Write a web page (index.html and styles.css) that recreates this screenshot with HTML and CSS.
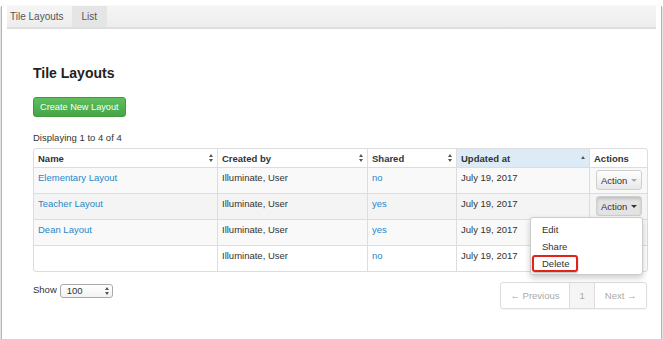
FILE: index.html
```html
<!DOCTYPE html>
<html lang="en">
<head>
    <meta charset="UTF-8">
    <title>Tile Layouts</title>
    <link rel="stylesheet" href="styles.css">
</head>
<body>
    <div class="window">
        <div class="tabs">
            <span class="tab">Tile Layouts</span>
            <span class="tab tab-active">List</span>
        </div>

        <div class="content">
            <h3>Tile Layouts</h3>
            <button class="btn-create">Create New Layout</button>
            <p class="count">Displaying 1 to 4 of 4</p>

            <table class="layouts">
                <colgroup>
                    <col class="col-name">
                    <col class="col-created">
                    <col class="col-shared">
                    <col class="col-updated">
                    <col class="col-actions">
                </colgroup>
                <thead>
                    <tr>
                        <th><span>Name</span><i class="sort"></i></th>
                        <th><span>Created by</span><i class="sort"></i></th>
                        <th><span>Shared</span><i class="sort"></i></th>
                        <th class="sorted"><span>Updated at</span><i class="sort-up"></i></th>
                        <th>Actions</th>
                    </tr>
                </thead>
                <tbody>
                    <tr class="odd">
                        <td><a href="#">Elementary Layout</a></td>
                        <td>Illuminate, User</td>
                        <td><a href="#">no</a></td>
                        <td>July 19, 2017</td>
                        <td><span class="btn-group"><button class="btn-action">Action <i class="caret caret-light"></i></button></span></td>
                    </tr>
                    <tr class="hover">
                        <td><a href="#">Teacher Layout</a></td>
                        <td>Illuminate, User</td>
                        <td><a href="#">yes</a></td>
                        <td>July 19, 2017</td>
                        <td>
                            <span class="btn-group">
                                <button class="btn-action btn-open">Action <i class="caret"></i></button>
                                <ul class="dropdown">
                                    <li>Edit</li>
                                    <li>Share</li>
                                    <li class="highlight">Delete</li>
                                </ul>
                            </span>
                        </td>
                    </tr>
                    <tr class="odd">
                        <td><a href="#">Dean Layout</a></td>
                        <td>Illuminate, User</td>
                        <td><a href="#">yes</a></td>
                        <td>July 19, 2017</td>
                        <td></td>
                    </tr>
                    <tr>
                        <td></td>
                        <td>Illuminate, User</td>
                        <td><a href="#">no</a></td>
                        <td>July 19, 2017</td>
                        <td></td>
                    </tr>
                </tbody>
            </table>

            <div class="footer">
                <div class="show">
                    Show
                    <span class="select">100 <i class="sort"></i></span>
                </div>
                <ul class="pagination">
                    <li>&larr; Previous</li>
                    <li class="current">1</li>
                    <li>Next &rarr;</li>
                </ul>
            </div>
        </div>
    </div>
</body>
</html>
```

FILE: styles.css
```css
body {
    margin: 0;
    font-family: "Liberation Sans", Arial, sans-serif;
    font-size: 9.5px;
    color: #333;
    background-color: #fff;
}

.window {
    width: 661px;
    height: 337px;
    margin-left: 1px;
    box-sizing: border-box;
    border: 1px solid #b5b5b5;
    border-top: none;
    border-bottom-color: #8a8a8a;
    box-shadow: 0 1px 2px rgba(0, 0, 0, 0.35);
}

.tabs {
    display: flex;
    margin: 6px 5px 0 5px;
    height: 21px;
    background: linear-gradient(#f5f5f5, #ededed);
    border-bottom: 2px solid #dedede;
}

.tab {
    display: flex;
    align-items: center;
    padding: 0 8px 0 3px;
    font-size: 10px;
    color: #555;
}

.tab-active {
    background-color: #e5e5e5;
    padding: 0 10px;
}

.content {
    padding: 0 0 0 31px;
}

.content h3 {
    margin: 36px 0 0 0;
    font-size: 14px;
    line-height: 16px;
    color: #222;
}

.btn-create {
    display: block;
    margin-top: 16px;
    height: 20px;
    padding: 0 6px;
    font-family: inherit;
    font-size: 9.2px;
    color: #fff;
    background: linear-gradient(#5cbf5c, #47a447);
    border: 1px solid #41993f;
    border-radius: 3px;
}

.count {
    margin: 14px 0 4px 0;
    line-height: 13px;
}

.layouts {
    width: 614px;
    table-layout: fixed;
    border-collapse: separate;
    border-spacing: 0;
    border: 1px solid #ddd;
    border-radius: 3px;
}

.col-name { width: 183px; }
.col-created { width: 150px; }
.col-shared { width: 89px; }
.col-updated { width: 133px; }
.col-actions { width: 58px; }

.layouts th,
.layouts td {
    text-align: left;
    vertical-align: top;
    border-left: 1px solid #ddd;
    padding: 0 4px;
}

.layouts th:first-child,
.layouts td:first-child {
    border-left: none;
}

.layouts th {
    height: 18px;
    vertical-align: middle;
    font-weight: bold;
    position: relative;
}

.layouts th.sorted {
    background-color: #dcebf5;
}

.layouts td {
    height: 26px;
    padding-top: 4px;
    box-sizing: border-box;
    border-top: 1px solid #ddd;
    line-height: 12px;
    font-weight: normal;
}

.layouts tr.odd td {
    background-color: #f9f9f9;
}

.layouts tr.hover td {
    background-color: #f4f4f4;
}

.layouts td:last-child {
    padding: 2px 0 0 6px;
}

a {
    color: #1f88c9;
    text-decoration: none;
}

.sort,
.sort-up {
    position: absolute;
    right: 6px;
    top: 50%;
    width: 0;
    height: 0;
}

.sort::before,
.sort::after,
.sort-up::before {
    content: "";
    position: absolute;
    left: -2px;
    border-left: 2.5px solid transparent;
    border-right: 2.5px solid transparent;
}

.sort::before,
.sort-up::before {
    top: -4px;
    border-bottom: 3px solid #555;
}

.sort::after {
    top: 1px;
    border-top: 3px solid #555;
}

.sort-up::before {
    top: -2px;
}

.btn-group {
    position: relative;
    display: inline-block;
}

.btn-action {
    height: 20px;
    width: 46px;
    padding: 0;
    font-family: inherit;
    font-size: 9.5px;
    color: #333;
    background: linear-gradient(#fff, #e8e8e8);
    border: 1px solid #cfcfcf;
    border-radius: 3px;
}

.btn-open {
    background: #e3e3e3;
    box-shadow: inset 0 2px 3px rgba(0, 0, 0, 0.15);
}

.caret {
    display: inline-block;
    vertical-align: middle;
    margin-left: 1px;
    border-left: 3px solid transparent;
    border-right: 3px solid transparent;
    border-top: 3px solid #333;
}

.caret-light {
    border-top-color: #aaa;
}

.dropdown {
    position: absolute;
    top: 21px;
    right: -1px;
    width: 111px;
    margin: 0;
    padding: 3px 0 2px 0;
    list-style: none;
    background-color: #fff;
    border: 1px solid #ccc;
    border-radius: 3px;
    box-shadow: 0 3px 6px rgba(0, 0, 0, 0.2);
    z-index: 2;
}

.dropdown li {
    height: 17px;
    line-height: 17px;
    padding-left: 11px;
}

.dropdown li.highlight {
    width: 34px;
    margin-left: 1px;
    padding-left: 8px;
    border: 2px solid #e2231a;
    border-radius: 3px;
    height: 13px;
    line-height: 13px;
    box-shadow: 0 1px 2px rgba(0, 0, 0, 0.3);
}

.footer {
    display: flex;
    justify-content: space-between;
    width: 614px;
    margin-top: 10px;
}

.show {
    display: flex;
    align-items: flex-start;
    gap: 3px;
    padding-top: 2px;
}

.select {
    position: relative;
    width: 45px;
    height: 12px;
    line-height: 12px;
    padding-left: 6px;
    border: 1px solid #aaa;
    border-radius: 3px;
    background: linear-gradient(#fff, #f2f2f2);
}

.select .sort {
    right: 5px;
}

.select .sort::before,
.select .sort::after {
    border-left-width: 2px;
    border-right-width: 2px;
}

.pagination {
    display: flex;
    margin: 0;
    padding: 0;
    list-style: none;
    height: 25px;
    border: 1px solid #ddd;
    border-radius: 3px;
    box-shadow: 0 1px 2px rgba(0, 0, 0, 0.05);
}

.pagination li {
    display: flex;
    align-items: center;
    padding: 0 9.5px;
    color: #aaa;
    border-left: 1px solid #ddd;
}

.pagination li:first-child {
    border-left: none;
}

.pagination li.current {
    background-color: #f5f5f5;
}
```
